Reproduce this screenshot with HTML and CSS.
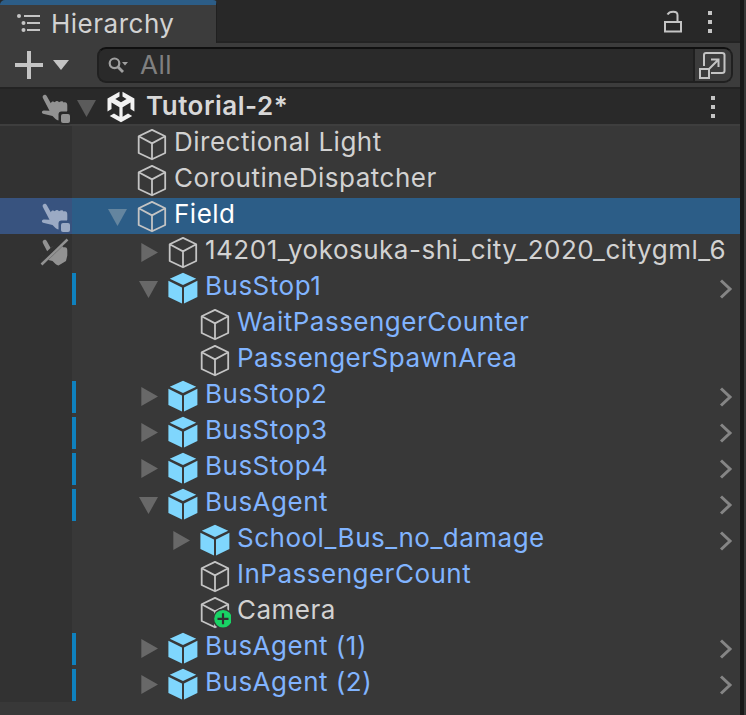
FILE: index.html
```html
<!DOCTYPE html>
<html lang="en">
<head>
<meta charset="utf-8">
<title>Hierarchy</title>
<link rel="stylesheet" href="styles.css">
</head>
<body>
<svg class="defs" aria-hidden="true">
  <symbol id="cube" viewBox="0 0 32 36"><path d="M16 3.9 29.2 10.3V27L16 33.3 2.7 27V10.3ZM2.7 10.3 16 17.4 29.2 10.3M16 17.4V33.3" fill="none" stroke="#c4c4c4" stroke-width="1.8" stroke-linejoin="round"/></symbol>
  <symbol id="prefab" viewBox="0 0 32 36"><path d="M16 2.7 29.2 8.8 16 15 2.8 8.8ZM1.4 10.8 15 17.5V33.6L1.4 27ZM30.4 10.8 17 17.5V33.6L30.4 27Z" fill="#7fd6fd"/></symbol>
  <symbol id="added" viewBox="0 0 32 36"><use href="#cube"/><circle cx="24" cy="24.8" r="10.2" fill="#383838"/><circle cx="24" cy="24.8" r="8.8" fill="#19d465"/><path d="M24 19.3v11M18.5 24.8h11" stroke="#303030" stroke-width="2.2"/></symbol>
  <symbol id="open" viewBox="0 0 32 36"><path d="M5 11H24L14.5 28Z" fill="currentColor"/></symbol>
  <symbol id="closed" viewBox="0 0 32 36"><path d="M7.3 9V28L24 18.5Z" fill="currentColor"/></symbol>
  <symbol id="chevron" viewBox="0 0 16 36"><path d="M3 10.5 12 19 3 27.5" fill="none" stroke="#858585" stroke-width="3"/></symbol>
  <symbol id="dots" viewBox="0 0 6 24"><path d="M1 1h4v4H1zM1 10h4v4H1zM1 19h4v4H1z" fill="#c4c4c4"/></symbol>
  <symbol id="palm" viewBox="0 0 32 36"><path d="M3.2 6.4C4.6 5 6.2 5.6 7 7.5L10.8 14.2C11.5 12.5 13 11.8 14.8 13.2 16 11.7 18 11.8 19 13.2 21 11.7 23 12 23.6 13.4 26.2 12.5 27.5 14 27.3 17V21.5L26 27 18.5 31.5C16.5 31.5 14.5 29 12.5 27L3 24.8C1.3 24 1.5 22 3.7 21.5L9.5 21.7 3 9.2C2.5 8 2.5 7 3.2 6.4Z" fill="currentColor"/></symbol>
</svg>
<div class="window">
  <main class="panel">
    <header class="tabs">
      <div class="tab">
        <svg class="list-icon" viewBox="0 0 24 20"><path d="M7 3h16M10 10h13M10 17h13" stroke="#c4c4c4" stroke-width="2"/><g fill="#c4c4c4"><circle cx="2" cy="3" r="2"/><circle cx="6.5" cy="10" r="2"/><circle cx="6.5" cy="17" r="2"/></g></svg>
        <span>Hierarchy</span>
      </div>
      <div class="tab-actions">
        <svg class="lock" viewBox="0 0 20 24"><path d="M2 12H18V21.5H2ZM4.5 4.5C6.5.8 14.5.5 14.5 5V12" fill="none" stroke="#c4c4c4" stroke-width="2"/></svg>
        <svg class="dots"><use href="#dots"/></svg>
      </div>
    </header>
    <div class="toolbar">
      <svg class="plus" viewBox="0 0 28 28"><path d="M14 0V28M0 14H28" stroke="#c4c4c4" stroke-width="4"/></svg>
      <svg class="drop" viewBox="0 0 16 10"><path d="M0 0H16L8 10Z" fill="#c4c4c4"/></svg>
      <div class="search">
        <svg class="magnifier" viewBox="0 0 22 18"><circle cx="6.5" cy="6.3" r="4.8" fill="none" stroke="#a0a0a0" stroke-width="2.2"/><path d="M9.5 9.5 15 15" stroke="#a0a0a0" stroke-width="2.8"/><path d="M14 5h6l-3 3.5Z" fill="#a0a0a0"/></svg>
        <span class="placeholder">All</span>
        <div class="expand">
          <svg viewBox="0 0 28 28"><g fill="none" stroke="#c4c4c4" stroke-width="2"><path d="M5 15V4Q5 2 7 2H23Q25.500 2 25.500 4V20Q25.500 22 23 22H12"/><path d="M1 18H10V27H1ZM10 18 19 9M12 8.500H19.500V16"/></g></svg>
        </div>
      </div>
    </div>
    <div class="scene">
      <div class="gutter"><svg class="pick"><use href="#palm"/><rect x="18.500" y="22.500" width="13" height="13" rx="3" fill="#292929"/><rect x="21" y="25" width="9" height="9" rx="2" fill="currentColor"/></svg></div>
      <svg class="scene-arrow arrow"><use href="#open"/></svg>
      <svg class="unity" viewBox="0 0 28 32"><path d="M12.500.8V5.500L8.300 8 14 11.300 19.600 8 15.500 5.500V.8L27.400 7.500V20.500L23.500 18V11.600L15.600 16.300V25.700L21 22.600 25.200 24.900 14 31.300 2.700 24.900 7 22.600 12.400 25.700V16.300L4.500 11.600V18L.5 20.500V7.500Z" fill="#f2f2f2"/></svg>
      <span class="scene-name">Tutorial-2*</span>
      <svg class="dots"><use href="#dots"/></svg>
    </div>
    <div class="tree">
      <div class="row d1"><div class="gutter"></div><div class="item"><svg class="arrow"></svg><svg class="icon"><use href="#cube"/></svg><span>Directional Light</span></div></div>
      <div class="row d1"><div class="gutter"></div><div class="item"><svg class="arrow"></svg><svg class="icon"><use href="#cube"/></svg><span>CoroutineDispatcher</span></div></div>
      <div class="row d1 selected"><div class="gutter"><svg class="pick"><use href="#palm"/><rect x="18.500" y="22.500" width="13" height="13" rx="3" fill="#38537f"/><rect x="21" y="25" width="9" height="9" rx="2" fill="currentColor"/></svg></div><div class="item"><svg class="arrow"><use href="#open"/></svg><svg class="icon"><use href="#cube"/></svg><span>Field</span></div></div>
      <div class="row d2"><div class="gutter"><svg class="pick"><use href="#palm"/><path d="M.5 28.500 26.500 3.500" stroke="#323232" stroke-width="7"/><path d="M1.500 30.500 27.500 5.500" stroke="currentColor" stroke-width="2.500"/></svg></div><div class="item"><svg class="arrow"><use href="#closed"/></svg><svg class="icon"><use href="#cube"/></svg><span>14201_yokosuka-shi_city_2020_citygml_6</span></div></div>
      <div class="row d2 linked changed"><div class="gutter"></div><div class="item"><svg class="arrow"><use href="#open"/></svg><svg class="icon"><use href="#prefab"/></svg><span>BusStop1</span></div><svg class="chevron"><use href="#chevron"/></svg></div>
      <div class="row d3 linked"><div class="gutter"></div><div class="item"><svg class="arrow"></svg><svg class="icon"><use href="#cube"/></svg><span>WaitPassengerCounter</span></div></div>
      <div class="row d3 linked"><div class="gutter"></div><div class="item"><svg class="arrow"></svg><svg class="icon"><use href="#cube"/></svg><span>PassengerSpawnArea</span></div></div>
      <div class="row d2 linked changed"><div class="gutter"></div><div class="item"><svg class="arrow"><use href="#closed"/></svg><svg class="icon"><use href="#prefab"/></svg><span>BusStop2</span></div><svg class="chevron"><use href="#chevron"/></svg></div>
      <div class="row d2 linked changed"><div class="gutter"></div><div class="item"><svg class="arrow"><use href="#closed"/></svg><svg class="icon"><use href="#prefab"/></svg><span>BusStop3</span></div><svg class="chevron"><use href="#chevron"/></svg></div>
      <div class="row d2 linked changed"><div class="gutter"></div><div class="item"><svg class="arrow"><use href="#closed"/></svg><svg class="icon"><use href="#prefab"/></svg><span>BusStop4</span></div><svg class="chevron"><use href="#chevron"/></svg></div>
      <div class="row d2 linked changed"><div class="gutter"></div><div class="item"><svg class="arrow"><use href="#open"/></svg><svg class="icon"><use href="#prefab"/></svg><span>BusAgent</span></div><svg class="chevron"><use href="#chevron"/></svg></div>
      <div class="row d3 linked"><div class="gutter"></div><div class="item"><svg class="arrow"><use href="#closed"/></svg><svg class="icon"><use href="#prefab"/></svg><span>School_Bus_no_damage</span></div><svg class="chevron"><use href="#chevron"/></svg></div>
      <div class="row d3 linked"><div class="gutter"></div><div class="item"><svg class="arrow"></svg><svg class="icon"><use href="#cube"/></svg><span>InPassengerCount</span></div></div>
      <div class="row d3"><div class="gutter"></div><div class="item"><svg class="arrow"></svg><svg class="icon"><use href="#added"/></svg><span>Camera</span></div></div>
      <div class="row d2 linked changed"><div class="gutter"></div><div class="item"><svg class="arrow"><use href="#closed"/></svg><svg class="icon"><use href="#prefab"/></svg><span>BusAgent (1)</span></div><svg class="chevron"><use href="#chevron"/></svg></div>
      <div class="row d2 linked changed"><div class="gutter"></div><div class="item"><svg class="arrow"><use href="#closed"/></svg><svg class="icon"><use href="#prefab"/></svg><span>BusAgent (2)</span></div><svg class="chevron"><use href="#chevron"/></svg></div>
    </div>
  </main>
</div>
</body>
</html>
```
FILE: styles.css
```css
* { box-sizing: border-box; }
body {
  margin: 0;
  background: #383838;
  color: #d2d2d2;
  font: 26px/36px Inter, sans-serif;
  letter-spacing: 0.5px;
  white-space: nowrap;
}
.defs { position: absolute; width: 0; height: 0; }
svg { display: block; flex: none; overflow: visible; }
.window { display: flex; height: 715px; overflow: hidden; }
.panel {
  display: flex;
  flex-direction: column;
  width: 744px;
  border-right: 4px solid #191919;
  background: #383838;
}
.tabs {
  display: flex;
  justify-content: space-between;
  height: 43px;
  background: #282828;
  box-shadow: inset 0 -2px #232323;
}
.tab {
  display: flex;
  align-items: center;
  gap: 10px;
  width: 217px;
  padding: 0 0 1px 17px;
  border-top: 5px solid #2c5d87;
  border-right: 1px solid #202020;
  border-radius: 5px 4px 0 0;
  background: #3c3c3c;
}
.list-icon { width: 24px; height: 20px; margin-top: -1px; }
.tab-actions { display: flex; align-items: center; gap: 24px; padding-right: 27px; }
.lock { width: 20px; height: 24px; }
.dots { width: 6px; height: 24px; }
.toolbar {
  display: flex;
  align-items: center;
  height: 46px;
  padding: 0 7px 0 15px;
  border-bottom: 2px solid #232323;
  background: #3c3c3c;
}
.plus { width: 28px; height: 28px; }
.drop { width: 16px; height: 10px; margin-left: 10px; }
.search {
  display: flex;
  align-items: center;
  flex: 1;
  height: 36px;
  margin-left: 28px;
  padding-left: 9px;
  border: 2px solid #202020;
  border-top-color: #101010;
  border-radius: 9px;
  background: #2a2a2a;
}
.magnifier { width: 22px; height: 18px; margin-top: 2px; }
.placeholder { flex: 1; margin-left: 10px; color: #808080; }
.expand {
  width: 38px;
  height: 32px;
  padding: 2px 0 0 4px;
  border-left: 2px solid #202020;
  border-radius: 0 7px 7px 0;
  background: #3c3c3c;
}
.expand svg { width: 28px; height: 28px; }
.scene {
  display: flex;
  align-items: center;
  height: 37px;
  padding-right: 24px;
  border-bottom: 2px solid #3e3e3e;
  background: #292929;
  color: #8c8c8c;
}
.gutter { flex: none; width: 72px; height: 36px; padding-left: 40px; }
.pick { width: 32px; height: 36px; color: #929292; }
.arrow { width: 32px; height: 36px; color: #686868; }
.scene-arrow { color: #5b5b5b; }
.unity { width: 28px; height: 32px; margin-left: 3px; }
.scene-name { flex: 1; margin-left: 11px; padding-bottom: 2px; color: #d8d8d8; font-weight: 600; }
.row { display: flex; height: 36px; }
.row .gutter { background: #323232; }
.item {
  display: flex;
  flex: 1;
  min-width: 0;
  margin-right: 3px;
  padding-left: 31px;
  overflow: hidden;
}
.d2 .item { padding-left: 62px; }
.d3 .item { padding-left: 94px; }
.item span { margin: -2px 0 0 6px; }
.icon { width: 32px; height: 36px; margin-left: 1px; }
.linked { color: #81b4ff; }
.changed .item {
  background: linear-gradient(#0f81be, #0f81be) 0 3px / 4px 32px no-repeat;
}
.chevron { width: 16px; height: 36px; margin-right: 6px; }
.selected { background: #2c5d87; color: #fff; }
.selected .gutter { background: #38537f; }
.selected .pick { color: #9baac4; }
.selected .arrow { color: #64859f; }
```
